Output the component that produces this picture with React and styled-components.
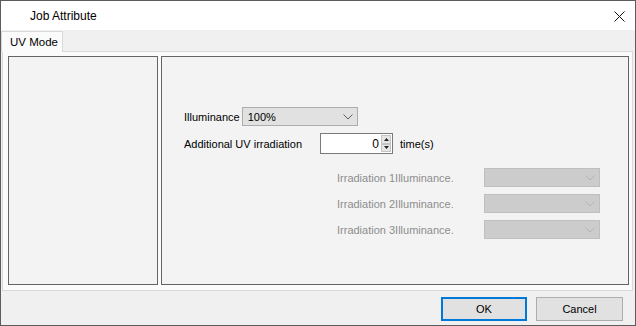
import React from 'react'
import styled, { createGlobalStyle } from 'styled-components'

const GlobalStyle = createGlobalStyle`
html, body {
  margin: 0;
  padding: 0;
  background: #ffffff;
}
* {
  box-sizing: border-box;
}
`

const Chevron = ({ color }) => (
  <svg width="10" height="6" viewBox="0 0 10 6">
    <polyline points="0.5,0.5 5,5 9.5,0.5" fill="none" stroke={color} strokeWidth="1" />
  </svg>
)

const ComboBox = ({ value, disabled }) => (
  <Combo disabled={disabled}>
    <span>{value}</span>
    <Chevron color={disabled ? '#b4b4b4' : '#606060'} />
  </Combo>
)

const App = () => {
  return (
    <>
      <GlobalStyle />
      <Window>
        <TitleBar>
          <Title>Job Attribute</Title>
          <CloseButton>
            <svg width="11" height="11" viewBox="0 0 11 11">
              <path d="M0.5 0.5 L10.5 10.5 M10.5 0.5 L0.5 10.5" stroke="#111" strokeWidth="1" />
            </svg>
          </CloseButton>
        </TitleBar>

        <Body>
          <TabStrip>
            <Tab active>UV Mode</Tab>
          </TabStrip>

          <TabPage>
            <Panel width="150px" />
            <Panel grow>
              <Form>
                <Row>
                  <Label>Illuminance</Label>
                  <ComboBox value="100%" />
                </Row>

                <Row top="7px" tall>
                  <Label width="134px">Additional UV irradiation</Label>
                  <NumberBox>
                    <NumberValue>0</NumberValue>
                    <Spinner>
                      <SpinButton>
                        <svg width="5" height="3" viewBox="0 0 5 3"><polygon points="2.5,0 5,3 0,3" fill="#222" /></svg>
                      </SpinButton>
                      <SpinButton>
                        <svg width="5" height="3" viewBox="0 0 5 3"><polygon points="0,0 5,0 2.5,3" fill="#222" /></svg>
                      </SpinButton>
                    </Spinner>
                  </NumberBox>
                  <Unit>time(s)</Unit>
                </Row>

                <DisabledGrid>
                  <Label disabled>Irradiation 1Illuminance.</Label>
                  <ComboBox disabled value="" />
                  <Label disabled>Irradiation 2Illuminance.</Label>
                  <ComboBox disabled value="" />
                  <Label disabled>Irradiation 3Illuminance.</Label>
                  <ComboBox disabled value="" />
                </DisabledGrid>
              </Form>
            </Panel>
          </TabPage>

          <Footer>
            <Button primary>OK</Button>
            <Button>Cancel</Button>
          </Footer>
        </Body>
      </Window>
    </>
  )
}

export default App

const Window = styled.div`
width: 636px;
height: 326px;
border: 1px solid #5c5c5c;
display: flex;
flex-direction: column;
background: #f0f0f0;
font-family: "Liberation Sans", Arial, sans-serif;
font-size: 11px;
color: #000;
`

const TitleBar = styled.div`
height: 29px;
flex: none;
background: #ffffff;
display: flex;
align-items: center;
justify-content: space-between;
padding-left: 29px;
padding-right: 10px;
`

const Title = styled.div`
font-size: 12px;
color: #000;
`

const CloseButton = styled.div`
width: 11px;
height: 11px;
display: flex;
margin-top: 1px;
`

const Body = styled.div`
flex: 1;
display: flex;
flex-direction: column;
background: #f0f0f0;
`

const TabStrip = styled.div`
height: 21px;
flex: none;
display: flex;
align-items: flex-end;
`

const Tab = styled.div`
position: relative;
z-index: 1;
height: 21px;
width: 62px;
margin-bottom: -1px;
padding-left: 8px;
display: flex;
align-items: center;
font-size: 11.5px;
background: #fbfbfb;
border: 1px solid #d9d9d9;
border-bottom: none;
`

const TabPage = styled.div`
height: 240px;
flex: none;
margin: 0 2px 0 1px;
border: 1px solid #d9d9d9;
background: #fbfbfb;
padding: 4px 3px 5px 5px;
display: flex;
gap: 3px;
`

const Panel = styled.div`
width: ${p => p.width || 'auto'};
flex: ${p => (p.grow ? 1 : 'none')};
border: 1px solid #646464;
background: #f3f3f3;
`

const Form = styled.div`
display: flex;
flex-direction: column;
padding: 50px 0 0 22px;
`

const Row = styled.div`
display: flex;
align-items: center;
height: ${p => (p.tall ? '21px' : '19px')};
margin-top: ${p => p.top || '0'};
gap: 2px;
`

const Label = styled.div`
width: ${p => p.width || 'auto'};
flex: none;
white-space: nowrap;
color: ${p => (p.disabled ? '#8d8d8d' : '#000')};
`

const Combo = styled.div`
width: 116px;
height: 19px;
display: flex;
align-items: center;
justify-content: space-between;
padding: 0 4px 0 5px;
background: ${p => (p.disabled ? '#cccccc' : '#e1e1e1')};
border: 1px solid ${p => (p.disabled ? '#bfbfbf' : '#adadad')};
`

const NumberBox = styled.div`
width: 73px;
height: 21px;
display: flex;
align-items: center;
background: #ffffff;
border: 1px solid #7a7a7a;
padding: 1px 1px 1px 0;
`

const NumberValue = styled.div`
flex: 1;
text-align: right;
padding-right: 2px;
font-size: 12px;
`

const Spinner = styled.div`
width: 10px;
height: 100%;
display: flex;
flex-direction: column;
`

const SpinButton = styled.div`
flex: 1;
display: flex;
align-items: center;
justify-content: center;
background: #e6e6e6;
border: 1px solid #c4c4c4;
`

const Unit = styled.div`
margin-left: 5px;
`

const DisabledGrid = styled.div`
display: grid;
grid-template-columns: 147px 116px;
grid-auto-rows: 19px;
row-gap: 7px;
align-items: center;
margin: 14px 0 0 153px;
`

const Footer = styled.div`
flex: 1;
display: flex;
justify-content: flex-end;
align-items: flex-start;
gap: 9px;
padding: 6px 12px 0 0;
`

const Button = styled.button`
width: ${p => (p.primary ? '86px' : '87px')};
height: 24px;
font-family: "Liberation Sans", Arial, sans-serif;
font-size: 11px;
color: #000;
background: #e1e1e1;
border: ${p => (p.primary ? '2px solid #0078d7' : '1px solid #adadad')};
padding: 0;
`
